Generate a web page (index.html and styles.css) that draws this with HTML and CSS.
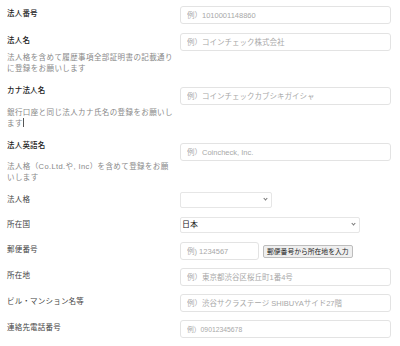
FILE: index.html
```html
<!DOCTYPE html>
<html lang="ja">
<head>
  <meta charset="UTF-8" />
  <title>法人情報の登録</title>
  <link rel="stylesheet" href="styles.css">
</head>
<body>

  <form class="corp-form">
    <div class="row row-first">
      <label class="row-label strong">法人番号</label>
      <input class="text-input" placeholder="例）1010001148860" />
    </div>

    <div class="row row-name">
      <div>
        <label class="row-label strong">法人名</label>
        <p class="row-note">法人格を含めて履歴事項全部証明書の記載通りに登録をお願いします</p>
      </div>
      <input class="text-input" placeholder="例）コインチェック株式会社" />
    </div>

    <div class="row row-kana">
      <div>
        <label class="row-label strong top">カナ法人名</label>
        <p class="row-note">銀行口座と同じ法人カナ氏名の登録をお願いします<span class="caret"></span></p>
      </div>
      <input class="text-input" placeholder="例）コインチェックカブシキガイシャ" />
    </div>

    <div class="row row-en">
      <div>
        <label class="row-label strong top">法人英語名</label>
        <p class="row-note">法人格（Co.Ltd.や, Inc）を含めて登録をお願いします</p>
      </div>
      <input class="text-input" placeholder="例）Coincheck, Inc." />
    </div>

    <div class="row row-select">
      <label class="row-label">法人格</label>
      <div class="select-wrap short">
        <select class="select"><option></option></select>
      </div>
    </div>

    <div class="row row-select">
      <label class="row-label">所在国</label>
      <div class="select-wrap long">
        <select class="select"><option>日本</option></select>
      </div>
    </div>

    <div class="row">
      <label class="row-label">郵便番号</label>
      <div class="zip-line">
        <input class="text-input zip" placeholder="例) 1234567" />
        <button type="button" class="zip-btn">郵便番号から所在地を入力</button>
      </div>
    </div>

    <div class="row">
      <label class="row-label">所在地</label>
      <input class="text-input" placeholder="例）東京都渋谷区桜丘町1番4号" />
    </div>

    <div class="row">
      <label class="row-label">ビル・マンション名等</label>
      <input class="text-input" placeholder="例）渋谷サクラステージ SHIBUYAサイド27階" />
    </div>

    <div class="row">
      <label class="row-label">連絡先電話番号</label>
      <input class="text-input small" placeholder="例）09012345678" />
    </div>
  </form>

</body>
</html>
```

FILE: styles.css
```css
body {
  margin: 0;
  background: #fff;
  font-family: "Liberation Sans", "Noto Sans CJK JP", sans-serif;
  color: #333;
}

.corp-form {
  padding: 6px 0 0 7px;
}

.row {
  display: grid;
  grid-template-columns: 169px 211px;
  column-gap: 4px;
  align-items: start;
  margin-bottom: 8px;
}

.row-first {
  margin-bottom: 9px;
}

.row-label {
  display: block;
  padding-top: 2px;
  font-size: 7.5px;
  line-height: 12px;
  letter-spacing: 0.2px;
  color: #444;
}

.row-label.strong {
  font-weight: 500;
  color: #222;
}

.row-label.top {
  padding-top: 0;
}

.row-note {
  margin: 10px 0 0;
  font-size: 7.5px;
  line-height: 11px;
  letter-spacing: 0.4px;
  color: #888;
}

.caret {
  display: inline-block;
  width: 0;
  height: 9px;
  border-left: 1px solid #555;
  vertical-align: -1px;
}

.row-name {
  margin-bottom: 11px;
}

.row-name .row-note {
  margin-top: 5px;
}

.row-kana {
  margin-bottom: 11px;
}

.row-kana .text-input {
  margin-top: 2px;
}

.row-en {
  margin-bottom: 9px;
}

.row-en .text-input {
  margin-top: 3px;
}

.row-en .row-note {
  margin-top: 9px;
}

.text-input {
  display: block;
  box-sizing: border-box;
  width: 211px;
  height: 18px;
  margin: 0;
  padding: 0 6px;
  border: 1px solid #e3e3e3;
  border-radius: 3px;
  font-family: inherit;
  font-size: 7.5px;
  color: #333;
  outline: none;
}

.text-input::placeholder {
  color: #a8a8a8;
}

.text-input.small {
  font-size: 6.8px;
}

.row-select {
  margin-bottom: 9px;
}

.select-wrap {
  position: relative;
  height: 16px;
}

.select-wrap.short {
  width: 92px;
}

.select-wrap.long {
  width: 180px;
}

.select {
  appearance: none;
  -webkit-appearance: none;
  display: block;
  box-sizing: border-box;
  width: 100%;
  height: 16px;
  margin: 0;
  padding: 0 0 0 1px;
  border: 1px solid #e6e6e6;
  border-radius: 2px;
  background: #fff;
  font-family: inherit;
  font-size: 8px;
  line-height: 14px;
  color: #222;
  outline: none;
}

.select-wrap::after {
  content: "";
  position: absolute;
  right: 5px;
  top: 5px;
  width: 2px;
  height: 2px;
  border-right: 1px solid #777;
  border-bottom: 1px solid #777;
  transform: rotate(45deg);
  pointer-events: none;
}

.zip-line {
  display: flex;
  align-items: center;
  gap: 4px;
}

.text-input.zip {
  width: 79px;
}

.zip-btn {
  box-sizing: border-box;
  height: 13px;
  padding: 0 3px;
  border: 1px solid #bdbdbd;
  border-radius: 2px;
  background: #efefef;
  font-family: inherit;
  font-size: 6.8px;
  line-height: 11px;
  color: #222;
  cursor: pointer;
}
```
